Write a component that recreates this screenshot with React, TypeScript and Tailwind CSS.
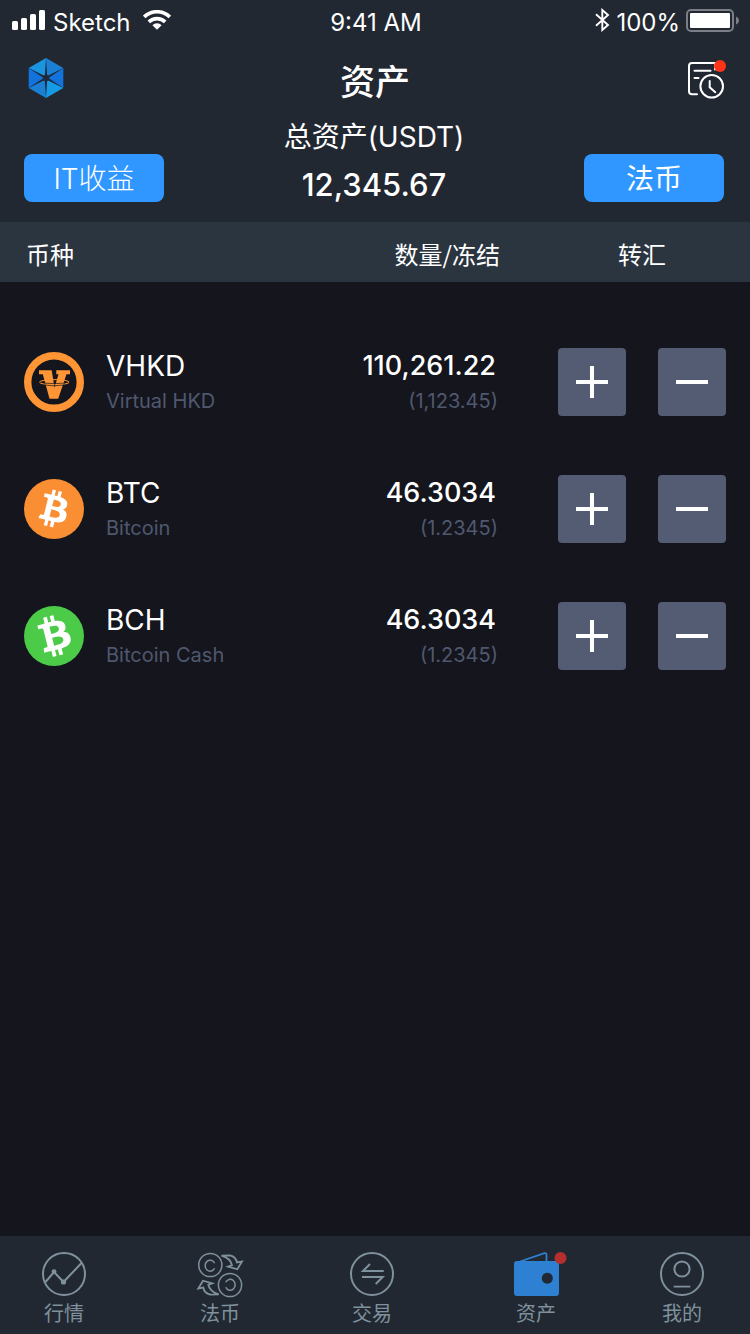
import type { ReactNode } from 'react';

const BITCOIN_GLYPH =
  'M17.288 10.291c.24-1.59-.974-2.45-2.64-3.03l.54-2.153-1.315-.33-.525 2.107c-.345-.087-.705-.167-1.064-.25l.526-2.127-1.32-.33-.54 2.165c-.285-.067-.565-.132-.84-.2l-1.815-.45-.35 1.407s.975.225.955.236c.535.136.63.486.615.766l-1.477 5.92c-.075.166-.24.406-.614.314.015.02-.96-.24-.96-.24l-.66 1.51 1.71.426.93.242-.54 2.19 1.32.327.54-2.17c.36.1.705.19 1.05.273l-.51 2.154 1.32.33.545-2.19c2.24.427 3.93.257 4.64-1.774.57-1.637-.03-2.58-1.217-3.196.854-.193 1.5-.76 1.68-1.93h.01zm-3.01 4.22c-.404 1.64-3.157.75-4.05.53l.72-2.9c.896.23 3.757.67 3.33 2.37zm.41-4.24c-.37 1.49-2.662.735-3.405.55l.654-2.64c.744.18 3.137.524 2.75 2.084v.006z';

function SignalIcon() {
  return (
    <svg width="33" height="20" viewBox="0 0 33 20" fill="#fff" aria-hidden="true">
      <rect x="0" y="11" width="6" height="9" rx="1.5" />
      <rect x="9" y="8" width="6" height="12" rx="1.5" />
      <rect x="18" y="4" width="6" height="16" rx="1.5" />
      <rect x="27" y="0" width="6" height="20" rx="1.5" />
    </svg>
  );
}

function WifiIcon() {
  return (
    <svg width="28" height="20" viewBox="0 0 28 20" aria-hidden="true">
      <g fill="none" stroke="#fff" strokeWidth="3.6">
        <path d="M1.200 6.900a18.400 18.400 0 0 1 25.600 0" />
        <path d="M5.800 11.900a11.800 11.800 0 0 1 16.400 0" />
      </g>
      <path d="M14 19.800l-4.600-4.500a6.300 6.300 0 0 1 9.200 0z" fill="#fff" />
    </svg>
  );
}

function BluetoothIcon() {
  return (
    <svg width="15" height="24" viewBox="0 0 15 24" fill="none" stroke="#fff" strokeWidth="1.9" aria-hidden="true">
      <path d="M1 6.200L13 17l-5.700 5V2L13 7 1 17.800" />
    </svg>
  );
}

function BatteryIcon() {
  return (
    <svg width="54" height="23" viewBox="0 0 54 23" aria-hidden="true">
      <rect x="1" y="1" width="46" height="21" rx="4" fill="none" stroke="#7b7f85" strokeWidth="2" />
      <rect x="4" y="4" width="40" height="15" rx="1" fill="#fff" />
      <path d="M50 7.500c4 1.500 4 6.500 0 8z" fill="#7b7f85" />
    </svg>
  );
}

function LogoIcon() {
  return (
    <svg width="36" height="40" viewBox="0 0 36 40" aria-hidden="true">
      <path d="M18 20V0L.7 10z" fill="#1a95e0" />
      <path d="M18 20V0l17.300 10z" fill="#1b80d4" />
      <path d="M18 20l17.300-10v20z" fill="#1373dd" />
      <path d="M18 20l17.300 10L18 40z" fill="#159ae6" />
      <path d="M18 20v20L.7 30z" fill="#1b80d4" />
      <path d="M18 20L.7 30V10z" fill="#1373dd" />
      <path
        d="M18 0l1.200 17.900L35.300 10 20.400 20l14.900 10-16.100-7.900L18 40l-1.200-17.900L.7 30l14.900-10L.7 10l16.100 7.900z"
        fill="#1f2a3a"
      />
      <circle cx="18" cy="20" r="3.200" fill="#1f2a3a" />
    </svg>
  );
}

function HistoryIcon() {
  return (
    <svg
      className="overflow-visible"
      width="39"
      height="40"
      viewBox="0 -1 39 40"
      fill="none"
      stroke="#fff"
      strokeWidth="2"
      strokeLinecap="round"
      aria-hidden="true"
    >
      <path d="M10 35.300H5a3 3 0 0 1-3-3V7a3 3 0 0 1 3-3h23v6.500" />
      <path d="M7.500 11.700h16M7.500 19h4" />
      <circle cx="24.700" cy="27.300" r="11.300" />
      <path d="M22.700 22v6.300l5.600 4.900" />
      <circle cx="33" cy="7" r="6" fill="#ff3318" stroke="none" />
    </svg>
  );
}

function VhkdIcon() {
  return (
    <svg width="60" height="60" viewBox="0 0 60 60" aria-hidden="true">
      <circle cx="30" cy="30" r="26.300" fill="none" stroke="#ff9535" strokeWidth="7.400" />
      <path
        d="M15 18.300h12.700l2.800 17.500 4-13.500h-2.200v-4H46v4h-3.500l-8.300 24.500h-8.700l-6.700-24.500H15z"
        fill="#ff9535"
      />
      <ellipse cx="30.300" cy="30.200" rx="14.800" ry="2.600" fill="none" stroke="#ff9535" strokeWidth="1" />
      <path d="M20 32.900q10 1.900 20.500 0M21 31.100q9.500 1.200 18.500 0" fill="none" stroke="#14151d" strokeWidth="0.7" />
    </svg>
  );
}

function BitcoinIcon() {
  return (
    <svg width="60" height="60" viewBox="0 0 24 24" aria-hidden="true">
      <circle cx="12" cy="12" r="12" fill="#f98e33" />
      <path d={BITCOIN_GLYPH} fill="#fff" fillRule="evenodd" />
    </svg>
  );
}

function BitcoinCashIcon() {
  return (
    <svg width="60" height="60" viewBox="0 0 24 24" aria-hidden="true">
      <circle cx="12" cy="12" r="12" fill="#4ccb48" />
      <path
        d={BITCOIN_GLYPH}
        fill="#fff"
        fillRule="evenodd"
        transform="translate(12.200 12) rotate(-28) scale(1.1) translate(-12 -12)"
      />
    </svg>
  );
}

function MarketIcon() {
  return (
    <svg width="44" height="44" viewBox="0 0 44 44" fill="none" stroke="currentColor" strokeWidth="2" aria-hidden="true">
      <circle cx="22" cy="22" r="21" />
      <path d="M3.500 30L12 20l9.500 10L40 10.500" />
      <g fill="currentColor" stroke="none">
        <circle cx="12" cy="19.700" r="2.400" />
        <circle cx="21.500" cy="30" r="2.600" />
      </g>
    </svg>
  );
}

function FiatIcon() {
  return (
    <svg
      className="overflow-visible"
      width="46"
      height="44"
      viewBox="0 -1 46 44"
      fill="none"
      stroke="currentColor"
      strokeWidth="1.500"
      aria-hidden="true"
    >
      <circle cx="13.300" cy="12" r="11.600" />
      <circle cx="33" cy="32" r="11.600" />
      <path d="M17.600 10.200a5 5.500 0 1 0 0 5" />
      <path d="M28.700 29.300a5 5.500 0 1 1 0 5" />
      <g strokeWidth="1.800">
        <path d="M24.500 2.700L33 2.300q6 1.500 7 7.200l5-1-4.700 7.800-9.300-2.600 4-1.500q-1.500-7-10.500-9.500z" />
        <path d="M21.800 41.300l-8.500.4q-6-1.500-7-7.200l-5 1L6 27.700l9.300 2.600-4 1.500q1.500 7 10.500 9.500z" />
      </g>
    </svg>
  );
}

function TradeIcon() {
  return (
    <svg width="44" height="44" viewBox="0 0 44 44" fill="none" stroke="currentColor" strokeWidth="2" aria-hidden="true">
      <circle cx="22" cy="22" r="21" />
      <path d="M20 12l-7 7h20.700M12 25h20.700l-7 7" />
    </svg>
  );
}

function WalletIcon() {
  return (
    <svg className="overflow-visible" width="45" height="44" viewBox="0 0 45 44" aria-hidden="true">
      <path d="M6 9.500L29.800 1.300q2.700-.8 2.700 1.700v6.500" fill="none" stroke="#2e80d2" strokeWidth="1.800" />
      <path
        fillRule="evenodd"
        fill="#2e80d2"
        d="M3 9h39a3 3 0 0 1 3 3v29a3 3 0 0 1-3 3H3a3 3 0 0 1-3-3V12a3 3 0 0 1 3-3zM33.300 20.800a5.500 5.500 0 1 0 .01 0z"
      />
      <circle cx="46.500" cy="6" r="6" fill="#b52f2f" />
    </svg>
  );
}

function ProfileIcon() {
  return (
    <svg width="44" height="44" viewBox="0 0 44 44" fill="none" stroke="currentColor" strokeWidth="2" aria-hidden="true">
      <circle cx="22" cy="22" r="21" />
      <circle cx="22" cy="17" r="7.600" />
      <path d="M13.700 34.600h16.600" strokeWidth="1.800" />
    </svg>
  );
}

type Asset = { symbol: string; name: string; amount: string; frozen: string; icon: ReactNode };

const assets: Asset[] = [
  { symbol: 'VHKD', name: 'Virtual HKD', amount: '110,261.22', frozen: '(1,123.45)', icon: <VhkdIcon /> },
  { symbol: 'BTC', name: 'Bitcoin', amount: '46.3034', frozen: '(1.2345)', icon: <BitcoinIcon /> },
  { symbol: 'BCH', name: 'Bitcoin Cash', amount: '46.3034', frozen: '(1.2345)', icon: <BitcoinCashIcon /> },
];

const tabs = [
  { label: '行情', href: '#market', icon: <MarketIcon /> },
  { label: '法币', href: '#fiat', icon: <FiatIcon /> },
  { label: '交易', href: '#trade', icon: <TradeIcon /> },
  { label: '资产', href: '#assets', icon: <WalletIcon />, current: true },
  { label: '我的', href: '#me', icon: <ProfileIcon /> },
];

function StatusBar() {
  return (
    <div className="grid h-10 grid-cols-[1fr_auto_1fr] items-center pr-2.5 pl-3 text-2xl">
      <div className="flex items-center gap-2">
        <SignalIcon />
        <span className="pt-1.5">Sketch</span>
        <span className="ml-1">
          <WifiIcon />
        </span>
      </div>
      <span className="pt-1.5">9:41 AM</span>
      <div className="flex items-center justify-end gap-1.5">
        <BluetoothIcon />
        <span className="pt-1.5">100%</span>
        <BatteryIcon />
      </div>
    </div>
  );
}

function AssetRow({ asset }: { asset: Asset }) {
  return (
    <tr className="h-[127px]">
      <td className="pl-6">
        <div className="flex items-center gap-[22px]">
          {asset.icon}
          <div className="pt-0.5">
            <div className="text-[28px] leading-9">{asset.symbol}</div>
            <div className="text-xl leading-[34px] text-[#50586f]">{asset.name}</div>
          </div>
        </div>
      </td>
      <td className="pt-0.5 pr-9 text-right">
        <div className="pr-0.5 text-[27px] leading-9 font-medium">{asset.amount}</div>
        <div className="text-xl leading-[34px] text-[#50586f]">{asset.frozen}</div>
      </td>
      <td className="px-6">
        <div className="flex justify-between">
          <button
            type="button"
            aria-label={`转入 ${asset.symbol}`}
            className="flex size-[68px] items-center justify-center rounded bg-[#545c73]"
          >
            <svg width="32" height="32" viewBox="0 0 32 32" fill="#fff" aria-hidden="true">
              <path d="M0 14h32v4H0zM14 0h4v32h-4z" />
            </svg>
          </button>
          <button
            type="button"
            aria-label={`转出 ${asset.symbol}`}
            className="flex size-[68px] items-center justify-center rounded bg-[#545c73]"
          >
            <svg width="32" height="32" viewBox="0 0 32 32" fill="#fff" aria-hidden="true">
              <path d="M0 14h32v4H0z" />
            </svg>
          </button>
        </div>
      </td>
    </tr>
  );
}

export default function App() {
  return (
    <div className="flex min-h-screen flex-col bg-[#14151d] font-['Inter','Noto_Sans_CJK_SC',sans-serif] text-white">
      <header className="bg-[#212832]">
        <StatusBar />
        <div className="grid h-[76px] grid-cols-[1fr_auto_1fr] items-center px-6">
          <a href="#home" aria-label="首页" className="ml-1 justify-self-start">
            <LogoIcon />
          </a>
          <h1 className="pt-2 text-[35px] leading-[52px] font-medium">资产</h1>
          <button type="button" aria-label="历史记录" className="justify-self-end">
            <HistoryIcon />
          </button>
        </div>
        <div className="grid grid-cols-[1fr_auto_1fr] items-end pr-[26px] pb-4 pl-6">
          <button type="button" className="mb-1 h-12 w-[140px] rounded-lg bg-[#2f97ff] pt-0.5 text-[28px] font-light">
            IT收益
          </button>
          <div className="text-center">
            <div className="text-[28px] leading-[42px]">总资产(USDT)</div>
            <div className="mt-1.5 text-[31px] leading-[42px] font-medium">12,345.67</div>
          </div>
          <button
            type="button"
            className="mb-1 h-12 w-[140px] justify-self-end rounded-lg bg-[#2f97ff] pt-0.5 text-[28px]"
          >
            法币
          </button>
        </div>
      </header>

      <main>
        <table className="w-full">
          <thead className="bg-[#2b3540] font-['Noto_Sans_CJK_SC',sans-serif] text-2xl">
            <tr className="h-[60px]">
              <th scope="col" className="pt-1 pl-[26px] text-left font-normal">
                币种
              </th>
              <th scope="col" className="pt-1 pr-[34px] text-right font-normal">
                数量/冻结
              </th>
              <th scope="col" className="w-[216px] px-6 pt-1 text-center font-normal">
                转汇
              </th>
            </tr>
          </thead>
          <tbody className="before:block before:h-9">
            {assets.map((asset) => (
              <AssetRow key={asset.symbol} asset={asset} />
            ))}
          </tbody>
        </table>
      </main>

      <nav
        aria-label="主导航"
        className="mt-auto grid grid-cols-[128fr_184fr_120fr_208fr_84fr] bg-[#212832] pt-4 pr-[26px] pb-1 text-[#7f919c]"
      >
        {tabs.map((tab) => (
          <a
            key={tab.label}
            href={tab.href}
            aria-current={tab.current ? 'page' : undefined}
            className="flex flex-col items-center gap-0.5 text-xl leading-8"
          >
            {tab.icon}
            <span>{tab.label}</span>
          </a>
        ))}
      </nav>
    </div>
  );
}
